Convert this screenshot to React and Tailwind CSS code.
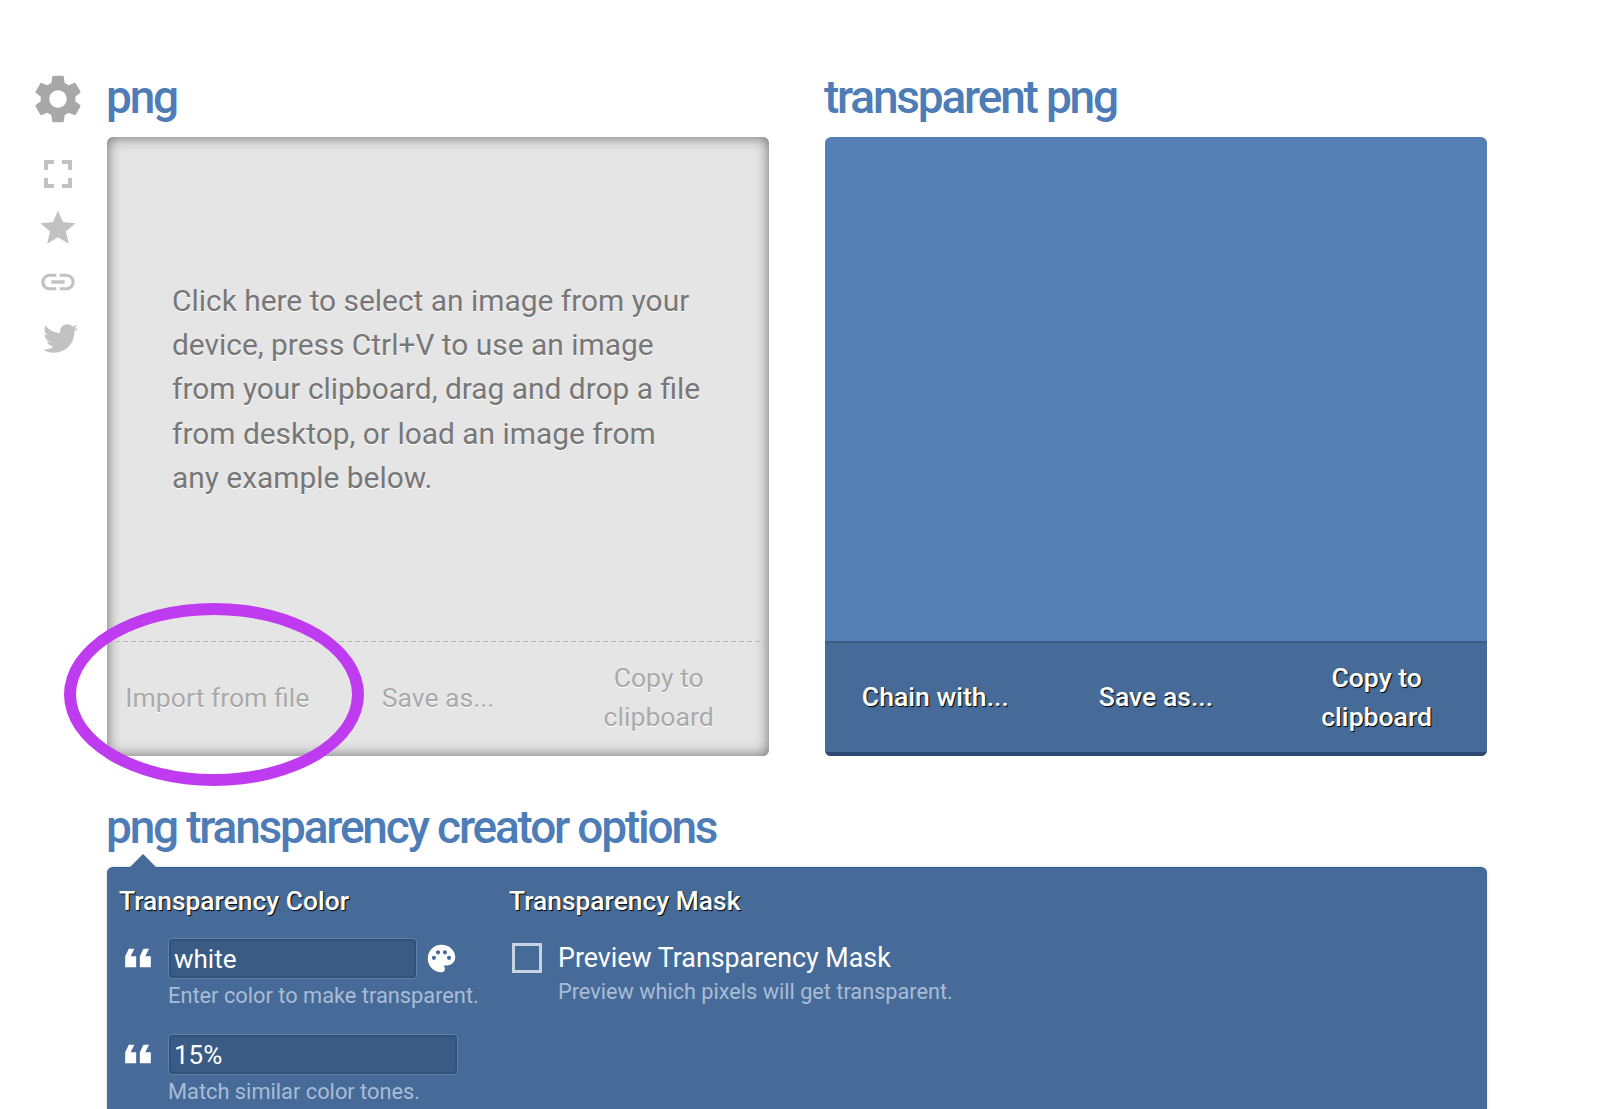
import React from "react";
import { MdSettings, MdFullscreen, MdStar, MdLink, MdPalette, MdFormatQuote } from "react-icons/md";
import { FaTwitter } from "react-icons/fa";

const font = "font-['Roboto','Liberation_Sans',sans-serif]";

function Heading({ children }) {
  return <h2 className="h-[70px] -ml-[1px] text-[46px] leading-[61px] font-medium tracking-[-2.2px] text-[#4d7cb6]">{children}</h2>;
}

function ActionButtons({ labels, disabled }) {
  const tone = disabled
    ? "text-[#aaa] [text-shadow:0_1px_0_#fff] pb-[4px]"
    : "text-white font-medium [text-shadow:1px_1px_1px_#000] pb-[2px]";
  return (
    <div className="grid grid-cols-3 h-full">
      {labels.map((l, i) => (
        <div key={i} className={"flex items-center justify-center text-center px-[14px] text-[26.6px] leading-[39px] " + tone}>
          <span className={l.includes("Copy") ? "w-[130px]" : ""}>{l}</span>
        </div>
      ))}
    </div>
  );
}

function QuoteIcon() {
  return <MdFormatQuote className="rotate-180 text-white shrink-0" size={44} />;
}

function ColorField({ value, width, help, palette }) {
  return (
    <div className="flex items-start">
      <div className="w-[49px] -ml-[3px] -mt-[2px] pr-[3px]"><QuoteIcon /></div>
      <div className="ml-[3px]">
        <div className="flex items-center">
          <div className={"h-[41px] rounded-[4px] border border-[#5e82ae] bg-[#3a5b84] shadow-[inset_0_0_3px_#1f3858] pl-[5px] text-[26px] leading-[40px] text-white " + width}>{value}</div>
          {palette && <MdPalette className="ml-[8px] text-white" size={33} />}
        </div>
        <p className="mt-[1px] text-[21.8px] leading-[32px] text-[#a9bcd6] whitespace-nowrap">{help}</p>
      </div>
    </div>
  );
}

export default function App() {
  return (
    <div className={"relative w-[1600px] h-[1109px] overflow-hidden bg-white " + font}>
      <div className="flex pt-[67px]">
        <aside className="w-[107px] shrink-0 flex flex-col items-center pl-[9px]">
          <MdSettings className="text-[#a8a8a8] mt-[3px]" size={58} />
          <MdFullscreen className="text-[#c2c2c2] mt-[22px]" size={48} />
          <MdStar className="text-[#c2c2c2] mt-[9px]" size={42} />
          <MdLink className="text-[#c2c2c2] mt-[13px]" size={40} />
          <FaTwitter className="text-[#c2c2c2] mt-[19px] ml-[5px]" size={35} />
        </aside>

        <main className="w-[1380px]">
          <div className="flex gap-[56px]">
            <section className="w-[662px]">
              <Heading>png</Heading>
              <div className="h-[619px] flex flex-col rounded-[6px] bg-[#e5e5e5] shadow-[inset_0_0_14px_rgba(0,0,0,0.55)]">
                <div className="h-[504px] flex items-center pl-[65px] pr-[60px] pt-[1px]">
                  <p className="text-[29.9px] leading-[44.3px] text-[#777] [text-shadow:0_1px_0_#fff]">
                    Click here to select an image from your device, press Ctrl+V to use an image from your clipboard, drag and drop a file from desktop, or load an image from any example below.
                  </p>
                </div>
                <div className="h-px bg-[repeating-linear-gradient(90deg,#b8b8b8_0,#b8b8b8_5px,transparent_5px,transparent_8px)]" />
                <div className="flex-1">
                  <ActionButtons disabled labels={["Import from file", "Save as...", "Copy to clipboard"]} />
                </div>
              </div>
            </section>

            <section className="w-[662px]">
              <Heading>transparent png</Heading>
              <div className="h-[619px] flex flex-col rounded-[6px] overflow-hidden bg-[#5480b5]">
                <div className="h-[504px]" />
                <div className="flex-1 bg-[#466b98] border-t-2 border-[#3b5d87] border-b-[4px] border-b-[#2c4a70]">
                  <ActionButtons labels={["Chain with...", "Save as...", "Copy to clipboard"]} />
                </div>
              </div>
            </section>
          </div>

          <h2 className="mt-[41px] h-[70px] -ml-[1px] text-[46px] leading-[61px] font-medium tracking-[-2.2px] text-[#4d7cb6]">png transparency creator options</h2>
          <section className="relative h-[300px] rounded-[6px] bg-[#466b98] border-t border-[#2f5f95] pl-[12px] pt-[16px] flex shadow-[0_0_3px_rgba(0,0,0,0.2)]">
            <div className="absolute left-[22px] top-[-14px] w-0 h-0 border-x-[14px] border-x-transparent border-b-[14px] border-b-[#466b98]" />
            <div className="w-[390px] shrink-0">
              <h3 className="text-[26.4px] leading-[34px] font-medium text-white [text-shadow:1px_1px_1px_#000]">Transparency Color</h3>
              <div className="mt-[20px] flex flex-col gap-[22px]">
                <ColorField value="white" width="w-[249px]" help="Enter color to make transparent." palette />
                <ColorField value="15%" width="w-[290px]" help="Match similar color tones." />
              </div>
            </div>
            <div>
              <h3 className="text-[26.4px] leading-[34px] font-medium text-white [text-shadow:1px_1px_1px_#000]">Transparency Mask</h3>
              <div className="mt-[24px] flex items-start">
                <div className="mt-[1px] ml-[3px] w-[30px] h-[30px] border-[3px] border-[#c8d3e2]" />
                <div className="ml-[16px]">
                  <div className="text-[26.8px] leading-[32px] text-white">Preview Transparency Mask</div>
                  <p className="mt-[2px] text-[21.7px] leading-[32px] text-[#a9bcd6]">Preview which pixels will get transparent.</p>
                </div>
              </div>
            </div>
          </section>
        </main>
      </div>

      <div className="absolute left-[64px] top-[603px] w-[300px] h-[183px] rounded-[50%] border-[12px] border-[#bf3bf0]" />
    </div>
  );
}
